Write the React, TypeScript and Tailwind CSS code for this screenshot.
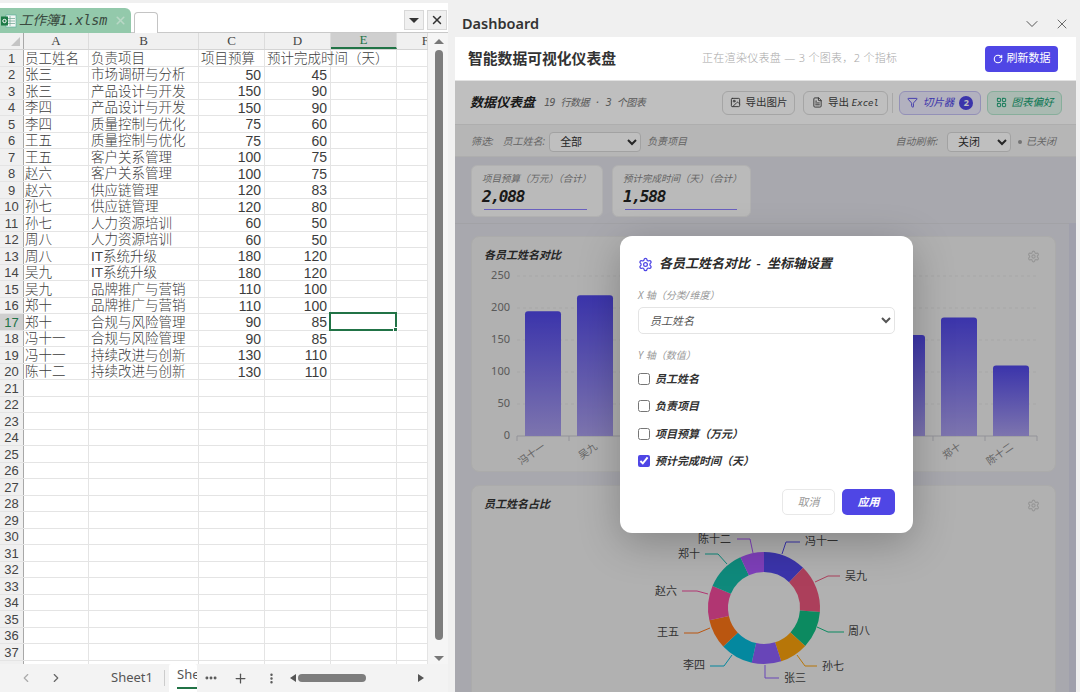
import { ChevronDown, ChevronLeft, ChevronRight, FileText, Filter, Image, LayoutGrid, MoreHorizontal, MoreVertical, Plus, RotateCw, Settings, X } from "lucide-react";

const rows: [string, string, number, number][] = [
  ["张三", "市场调研与分析", 50, 45],
  ["张三", "产品设计与开发", 150, 90],
  ["李四", "产品设计与开发", 150, 90],
  ["李四", "质量控制与优化", 75, 60],
  ["王五", "质量控制与优化", 75, 60],
  ["王五", "客户关系管理", 100, 75],
  ["赵六", "客户关系管理", 100, 75],
  ["赵六", "供应链管理", 120, 83],
  ["孙七", "供应链管理", 120, 80],
  ["孙七", "人力资源培训", 60, 50],
  ["周八", "人力资源培训", 60, 50],
  ["周八", "IT系统升级", 180, 120],
  ["吴九", "IT系统升级", 180, 120],
  ["吴九", "品牌推广与营销", 110, 100],
  ["郑十", "品牌推广与营销", 110, 100],
  ["郑十", "合规与风险管理", 90, 85],
  ["冯十一", "合规与风险管理", 90, 85],
  ["冯十一", "持续改进与创新", 130, 110],
  ["陈十二", "持续改进与创新", 130, 110],
];

const totals: [string, number, string][] = [
  ["冯十一", 195, "#4f46e5"],
  ["吴九", 220, "#e6547a"],
  ["周八", 170, "#10b981"],
  ["孙七", 130, "#f59e0b"],
  ["张三", 135, "#8b5cf6"],
  ["李四", 150, "#06b6d4"],
  ["王五", 135, "#f97316"],
  ["赵六", 158, "#ec4899"],
  ["郑十", 185, "#14b8a6"],
  ["陈十二", 110, "#a855f7"],
];

const pieLabels: { pts: string; x: number; y: number; end?: boolean }[] = [
  { pts: "782,554 786,542 800,542", x: 805, y: 545 },
  { pts: "815,582 828,576 840,576", x: 845, y: 580 },
  { pts: "817,627 828,632 844,632", x: 848, y: 635 },
  { pts: "797,655 805,666 817,666", x: 822, y: 670 },
  { pts: "765,665 765,678 779,678", x: 784, y: 682 },
  { pts: "732,655 724,666 710,666", x: 705, y: 669, end: true },
  { pts: "710,628 698,633 684,633", x: 679, y: 636, end: true },
  { pts: "708,594 697,591 682,591", x: 677, y: 595, end: true },
  { pts: "727,564 718,554 705,554", x: 700, y: 558, end: true },
  { pts: "753,553 750,539 737,539", x: 731, y: 543, end: true },
];

const CX = 764;
const CY = 608;
const RO = 56;
const RI = 36;

function slicePath(start: number, end: number) {
  const p = (r: number, a: number) => `${(CX + r * Math.sin(a)).toFixed(2)} ${(CY - r * Math.cos(a)).toFixed(2)}`;
  const large = end - start > Math.PI ? 1 : 0;
  return `M${p(RO, start)} A${RO} ${RO} 0 ${large} 1 ${p(RO, end)} L${p(RI, end)} A${RI} ${RI} 0 ${large} 0 ${p(RI, start)} Z`;
}

function Sheet() {
  const cols = ["A", "B", "C", "D", "E", "F"];
  const widths = ["w-[65px]", "w-[110px]", "w-[66px]", "w-[66px]", "w-[66px]", "w-[31px]"];
  const blank = Array.from({ length: 18 }, (_, i) => i + 21);
  const cell = "h-full shrink-0 border-r border-[#e4e4e4] flex items-center overflow-visible whitespace-nowrap pt-[1px]";
  return (
    <div className="w-[448px] h-full flex flex-col bg-white font-['Liberation_Sans','Noto_Sans_CJK_SC',sans-serif] text-[#3c3c3c]">
      <div className="h-[33px] shrink-0 flex bg-white border-t-[3px] border-t-[#f0f0f0] border-b border-[#c9c9c9] pt-[5px] relative">
        <div className="w-[131px] h-[25px] bg-[#93c9ab] rounded-tr-[6px] flex items-center pl-[1px] gap-[2px] italic">
          <svg width="16" height="16" viewBox="0 0 16 16" className="shrink-0">
            <rect x="5" y="2" width="10" height="12" fill="#f3f7f4" stroke="#5a9" strokeWidth="0.6" />
            <path d="M9 3v10M6 5.5h8M6 8h8M6 10.500h8" stroke="#7a9" strokeWidth="0.8" />
            <rect x="0" y="3.500" width="7" height="9" fill="#1d7a46" />
            <circle cx="3.500" cy="8" r="1.700" fill="none" stroke="#fff" strokeWidth="1" />
          </svg>
          <span className="text-[13.5px] font-['DejaVu_Sans_Mono','Noto_Sans_CJK_SC',monospace] tracking-[-0.1px] text-[#3a4a40] whitespace-nowrap">工作簿1.xlsm</span>
          <X size={13} className="ml-[5px] text-[#b9d8c6] shrink-0" strokeWidth={3} />
        </div>
        <div className="ml-[3px] mt-[4px] w-[24px] h-[21px] bg-white border border-b-0 border-[#c4c4c4] rounded-t-[4px]" />
        <div className="ml-auto mr-[1px] mt-[2px] flex gap-[3px]">
          <div className="w-[20px] h-[20px] bg-[#f0f0f0] border border-[#d8d8d8] flex items-center justify-center">
            <div className="w-0 h-0 border-x-[5px] border-x-transparent border-t-[5px] border-t-[#333]" />
          </div>
          <div className="w-[20px] h-[20px] bg-[#f0f0f0] border border-[#d8d8d8] flex items-center justify-center">
            <X size={14} strokeWidth={2.5} className="text-[#333]" />
          </div>
        </div>
      </div>
      <div className="flex-1 min-h-0 flex">
        <div className="w-[428px] flex flex-col overflow-hidden">
          <div className="h-[17px] shrink-0 flex bg-[#f0f0f0] border-b border-[#d4d4d4] font-['Liberation_Serif',serif] text-[13px] text-[#444]">
            <div className="w-[24px] shrink-0 border-r border-[#a8a8a8] relative">
              <div className="absolute right-[3px] bottom-[3px] w-0 h-0 border-l-[9px] border-l-transparent border-b-[9px] border-b-[#c4c4c4]" />
            </div>
            {cols.map((c, i) => (
              <div key={c} className={`${widths[i]} shrink-0 border-r border-[#dcdcdc] flex items-center overflow-hidden ${c === "E" ? "bg-[#cfcfcf] border-b-2 border-b-[#217346] text-[#217346] justify-center" : c === "F" ? "justify-end" : "justify-center"}`}>
                {c === "F" ? <span className="translate-x-[2px]">F</span> : c}
              </div>
            ))}
          </div>
          <div className="flex-1 min-h-0 overflow-hidden">
            <SheetRow n={1} a="员工姓名" b="负责项目" c="项目预算" d="预计完成时间（天）" cell={cell} widths={widths} />
            {rows.map((r, i) => (
              <SheetRow key={i} n={i + 2} a={r[0]} b={r[1]} c={r[2]} d={r[3]} cell={cell} widths={widths} sel={i + 2 === 17} />
            ))}
            {blank.map((n) => (
              <SheetRow key={n} n={n} cell={cell} widths={widths} />
            ))}
          </div>
        </div>
        <div className="w-[20px] bg-[#f5f5f5] flex flex-col items-center pl-[2px]">
          <div className="h-[17px] shrink-0 flex items-center justify-center">
            <div className="w-0 h-0 border-x-[5px] border-x-transparent border-b-[5px] border-b-[#777]" />
          </div>
          <div className="w-[8px] h-[590px] rounded-full bg-[#7d7d7d]" />
          <div className="mt-auto mb-[3px] w-0 h-0 border-x-[5px] border-x-transparent border-t-[5px] border-t-[#777]" />
        </div>
      </div>
      <div className="h-[28px] shrink-0 bg-[#f3f3f3] flex items-center text-[#555]">
        <ChevronLeft size={14} className="ml-[19px] text-[#aaa]" />
        <ChevronRight size={14} className="ml-[16px] text-[#666]" />
        <span className="ml-[48px] text-[13px] w-[41px] font-['Noto_Sans',sans-serif]">Sheet1</span>
        <div className="ml-[12px] w-px h-[16px] bg-[#ccc]" />
        <div className="ml-[4px] w-[28px] h-[28px] bg-white pl-[8px] pt-[1px] overflow-hidden text-[13px] font-['Noto_Sans',sans-serif] relative rounded-t-[2px] whitespace-nowrap">
          <span>She</span>
          <div className="absolute left-[8px] right-0 bottom-[3px] h-[2px] bg-[#217346]" />
        </div>
        <MoreHorizontal size={14} strokeWidth={3} className="ml-[7px] text-[#555]" />
        <Plus size={15} className="ml-[15px] text-[#555]" />
        <MoreVertical size={13} strokeWidth={2.5} className="ml-[17px] text-[#555]" />
        <div className="ml-[12px] w-0 h-0 border-y-[4px] border-y-transparent border-r-[6px] border-r-[#555]" />
        <div className="ml-[2px] w-[68px] h-[8px] rounded-full bg-[#7d7d7d]" />
        <div className="ml-[52px] w-0 h-0 border-y-[4px] border-y-transparent border-l-[6px] border-l-[#555]" />
      </div>
    </div>
  );
}

function SheetRow({ n, a, b, c, d, cell, widths, sel }: { n: number; a?: string; b?: string; c?: string | number; d?: string | number; cell: string; widths: string[]; sel?: boolean }) {
  const numeric = typeof c === "number";
  return (
    <div className="h-[16.5px] flex border-b border-[#e4e4e4] text-[13.5px] leading-none font-light">
      <div className={`w-[24px] shrink-0 border-r border-[#a8a8a8] flex items-center justify-center pt-[1px] text-[13px] font-normal ${sel ? "bg-[#cfcfcf] text-[#217346]" : "bg-[#f0f0f0] text-[#444]"}`}>{n}</div>
      <div className={`${cell} ${widths[0]} pl-[1px]`}>{a}</div>
      <div className={`${cell} ${widths[1]} pl-[2px]`}>{b}</div>
      <div className={`${cell} ${widths[2]} ${numeric ? "justify-end pr-[3px] text-[14px] font-normal" : "pl-[2px]"}`}>{c}</div>
      <div className={`${cell} ${widths[3]} ${numeric ? "justify-end pr-[3px] text-[14px] font-normal" : "pl-[2px]"}`}>{d}</div>
      <div className={`${cell} ${widths[4]} relative`}>
        {sel && <div className="absolute -left-[2px] -top-[2px] w-[68px] h-[18.500px] border-2 border-[#217346]"><div className="absolute -right-[3px] -bottom-[3px] w-[5px] h-[5px] bg-[#217346] border border-white" /></div>}
      </div>
      <div className={`${cell} ${widths[5]}`} />
    </div>
  );
}

function ToolButton({ children, cls }: { children: React.ReactNode; cls: string }) {
  return <div className={`h-[24px] rounded-[6px] border flex items-center justify-center gap-[5px] text-[10.500px] whitespace-nowrap ${cls}`}>{children}</div>;
}

function BarChart() {
  const ticks = [0, 50, 100, 150, 200, 250];
  return (
    <svg viewBox="472 265 583 200" width="583" height="200" className="block">
      <defs>
        <linearGradient id="barFill" x1="0" y1="0" x2="0" y2="1">
          <stop offset="0" stopColor="#4f46e5" />
          <stop offset="1" stopColor="#a79ce8" />
        </linearGradient>
      </defs>
      {ticks.map((t) => (
        <g key={t}>
          <line x1="517" x2="1037" y1={435 - t * 0.64} y2={435 - t * 0.64} stroke={t === 0 ? "#c4c4cc" : "#e0e0e0"} strokeDasharray={t === 0 ? undefined : "3 3"} />
          <text x="510" y={438 - t * 0.64} textAnchor="end" fontSize="11" fill="#777">{t}</text>
        </g>
      ))}
      {totals.map((b, i) => {
        const x = 525 + i * 52;
        const h = b[1] * 0.64;
        return (
          <g key={b[0]}>
            <line x1={x - 8} x2={x - 8} y1="435" y2="440" stroke="#c4c4cc" />
            <path d={`M${x} 435 V${435 - h + 3} Q${x} ${435 - h} ${x + 3} ${435 - h} H${x + 33} Q${x + 36} ${435 - h} ${x + 36} ${435 - h + 3} V435 Z`} fill="url(#barFill)" />
            <text x={x + 21} y="447" fontSize="10" textAnchor="end" fill="#888" transform={`rotate(-35 ${x + 21} 447)`}>{b[0]}</text>
          </g>
        );
      })}
      <line x1="1037" x2="1037" y1="435" y2="440" stroke="#c4c4cc" />
    </svg>
  );
}

function PieChart() {
  const total = totals.reduce((s, t) => s + t[1], 0);
  let acc = 0;
  return (
    <svg viewBox="472 515 583 177" width="583" height="177" className="block">
      {totals.map((t) => {
        const a0 = (acc / total) * Math.PI * 2;
        acc += t[1];
        const a1 = (acc / total) * Math.PI * 2;
        return <path key={t[0]} d={slicePath(a0, a1)} fill={t[2]} />;
      })}
      {totals.map((t, i) => (
        <g key={t[0]}>
          <polyline points={pieLabels[i].pts} fill="none" stroke={t[2]} strokeWidth="1" />
          <text x={pieLabels[i].x} y={pieLabels[i].y} fontSize="11" fill="#444" textAnchor={pieLabels[i].end ? "end" : "start"}>{t[0]}</text>
        </g>
      ))}
    </svg>
  );
}

function Dashboard() {
  return (
    <div className="flex-1 min-w-0 h-full flex flex-col pl-[7px] pr-[4px] bg-[#f0f0f0] font-['Noto_Sans','Noto_Sans_CJK_SC',sans-serif]">
      <div className="h-[37px] shrink-0 flex items-center justify-between pl-[7px] pr-[6px] pt-[11px]">
        <span className="text-[14.500px] font-semibold text-[#333]">Dashboard</span>
        <div className="flex items-center gap-[12px] text-[#555]">
          <ChevronDown size={20} strokeWidth={1.2} />
          <X size={16} strokeWidth={1.3} />
        </div>
      </div>
      <div className="h-[44px] shrink-0 bg-white border-b border-[#e2e2e2] flex items-center pl-[13px] pr-[18px]">
        <span className="text-[14.800px] font-bold text-[#333]">智能数据可视化仪表盘</span>
        <span className="ml-[86px] text-[11px] text-[#a8a8a8] tracking-[0.3px] font-light">正在渲染仪表盘 — 3 个图表，2 个指标</span>
        <div className="ml-auto w-[73px] h-[26px] rounded-[4px] bg-[#4f46e5] text-white text-[11px] flex items-center justify-center gap-[4px]">
          <RotateCw size={10} strokeWidth={2.5} />刷新数据
        </div>
      </div>
      <div className="flex-1 min-h-0 relative overflow-hidden bg-[#e1e1e8]">
        <div className="bg-white h-[44px] flex items-center border-b border-[#e8e8e8] pl-[15px] pr-[14px]">
          <span className="text-[13px] font-bold italic text-[#222]">数据仪表盘</span>
          <span className="ml-[9px] text-[10px] italic text-[#777] font-['DejaVu_Sans_Mono','Noto_Sans_CJK_SC',monospace] tracking-[-0.5px]">19 行数据 · 3 个图表</span>
          <div className="ml-auto flex items-center">
            <ToolButton cls="w-[73px] border-[#dcdcdc] bg-white text-[#444]"><Image size={11} />导出图片</ToolButton>
            <ToolButton cls="w-[85px] ml-[8px] border-[#dcdcdc] bg-white text-[#444]"><FileText size={11} /><span>导出 <span className="italic font-['DejaVu_Sans_Mono',monospace] text-[9px]">Excel</span></span></ToolButton>
            <div className="w-px h-[20px] bg-[#e0e0e0] ml-[4px]" />
            <ToolButton cls="w-[82px] ml-[6px] border-[#c5c0f5] bg-[#eeecff] text-[#4f46e5] italic"><Filter size={11} />切片器<span className="w-[14px] h-[14px] rounded-full bg-[#4f46e5] text-white text-[9px] flex items-center justify-center not-italic font-bold">2</span></ToolButton>
            <ToolButton cls="w-[75px] ml-[6px] border-[#b5e8cf] bg-[#e3f8ee] text-[#10a070] italic"><LayoutGrid size={11} />图表偏好</ToolButton>
          </div>
        </div>
        <div className="h-[32px] bg-[#f3f3f3] border-b border-[#e8e8e8] flex items-center pl-[16px] pr-[20px] pt-[2px] text-[10px] text-[#888] italic">
          <span>筛选:</span>
          <span className="ml-[9px]">员工姓名:</span>
          <select defaultValue="全部" className="ml-[4px] w-[92px] h-[20px] rounded-[4px] border border-[#d8d8d8] bg-white text-[11px] not-italic text-[#333] pl-[6px]">
            <option>全部</option>
          </select>
          <span className="ml-[6px]">负责项目</span>
          <span className="ml-auto">自动刷新:</span>
          <select defaultValue="关闭" className="ml-[9px] w-[64px] h-[20px] rounded-[4px] border border-[#d8d8d8] bg-white text-[11px] not-italic text-[#333] pl-[6px]">
            <option>关闭</option>
          </select>
          <span className="ml-[7px] w-[4px] h-[4px] rounded-full bg-[#9a9a9a]" />
          <span className="ml-[4px]">已关闭</span>
        </div>
        <div className="h-[67px] flex gap-[9px] pl-[16px] pt-[8px] border-b border-[#d8d8de]">
          {[
            ["项目预算（万元）（合计）", "2,088", "w-[132px]", "w-[103px]"],
            ["预计完成时间（天）（合计）", "1,588", "w-[139px]", "w-[112px]"],
          ].map(([l, v, w, u]) => (
            <div key={l} className={`${w} h-[52px] bg-[#f8f8f8] border border-[#ececec] rounded-[6px] pl-[10px] pt-[6px]`}>
              <div className="text-[9.500px] italic text-[#888] leading-[14px] whitespace-nowrap">{l}</div>
              <div className="text-[16px] font-bold italic text-[#222] leading-[22px] font-['DejaVu_Sans_Mono',monospace] tracking-[-1.200px]">{v}</div>
              <div className={`${u} h-[1px] bg-[#8c80ff] ml-[2px] mt-[1px]`} />
            </div>
          ))}
        </div>
        <div className="pl-[16px] pt-[12px] flex flex-col gap-[13px]">
          <div className="w-[585px] h-[236px] bg-[#ececec] rounded-[8px] border border-[#e4e4e4] relative shrink-0">
            <div className="h-[29px] pl-[12px] pt-[9px] text-[11px] font-semibold italic text-[#333] leading-[18px]">各员工姓名对比</div>
            <Settings size={13} className="absolute right-[15px] top-[13px] text-[#c8c8c8]" />
            <BarChart />
          </div>
          <div className="w-[585px] h-[240px] bg-[#ececec] rounded-t-[8px] border border-[#e4e4e4] relative shrink-0 overflow-hidden">
            <div className="h-[29px] pl-[12px] pt-[9px] text-[11px] font-semibold italic text-[#333] leading-[18px]">员工姓名占比</div>
            <Settings size={13} className="absolute right-[15px] top-[13px] text-[#c8c8c8]" />
            <PieChart />
          </div>
        </div>
        <div className="absolute right-0 top-[142px] bottom-0 w-[7px] bg-[#d6d6e6]" />
        <div className="absolute inset-0 bg-black/25" />
        <div className="absolute left-[165px] top-[155px] w-[293px] h-[297px] bg-white rounded-[12px] shadow-[0_10px_40px_rgba(0,0,0,0.25)] px-[18px] pt-[19px] flex flex-col">
          <div className="flex items-center gap-[6px] h-[18px]">
            <Settings size={15} className="text-[#4f46e5] shrink-0" />
            <span className="text-[13px] font-semibold italic text-[#2b2b2b] whitespace-nowrap [word-spacing:3px]">各员工姓名对比 - 坐标轴设置</span>
          </div>
          <div className="mt-[15px] text-[10px] italic text-[#999] leading-[14px]">X 轴（分类/维度）</div>
          <select defaultValue="员工姓名" className="mt-[5px] w-full h-[27px] rounded-[5px] border border-[#e4e4e4] bg-white text-[11px] italic text-[#555] pl-[7px]">
            <option>员工姓名</option>
          </select>
          <div className="mt-[14px] text-[10px] italic text-[#999] leading-[14px]">Y 轴（数值）</div>
          <div className="mt-[3px] flex flex-col">
            {[["员工姓名", false], ["负责项目", false], ["项目预算（万元）", false], ["预计完成时间（天）", true]].map(([l, on]) => (
              <label key={l as string} className="h-[27.500px] flex items-center gap-[5px]">
                <input type="checkbox" defaultChecked={on as boolean} className="w-[12px] h-[12px] m-0 accent-[#4f46e5]" />
                <span className="text-[11px] font-semibold italic text-[#333] whitespace-nowrap">{l as string}</span>
              </label>
            ))}
          </div>
          <div className="mt-[14px] flex justify-end gap-[7px]">
            <div className="w-[53px] h-[26px] rounded-[5px] border border-[#e8e8e8] bg-white text-[11px] italic text-[#999] flex items-center justify-center">取消</div>
            <div className="w-[53px] h-[26px] rounded-[5px] bg-[#4f46e5] text-white text-[11px] italic font-semibold flex items-center justify-center">应用</div>
          </div>
        </div>
      </div>
    </div>
  );
}

export default function App() {
  return (
    <div className="w-[1080px] h-[692px] flex overflow-hidden bg-[#f0f0f0]">
      <Sheet />
      <Dashboard />
    </div>
  );
}
